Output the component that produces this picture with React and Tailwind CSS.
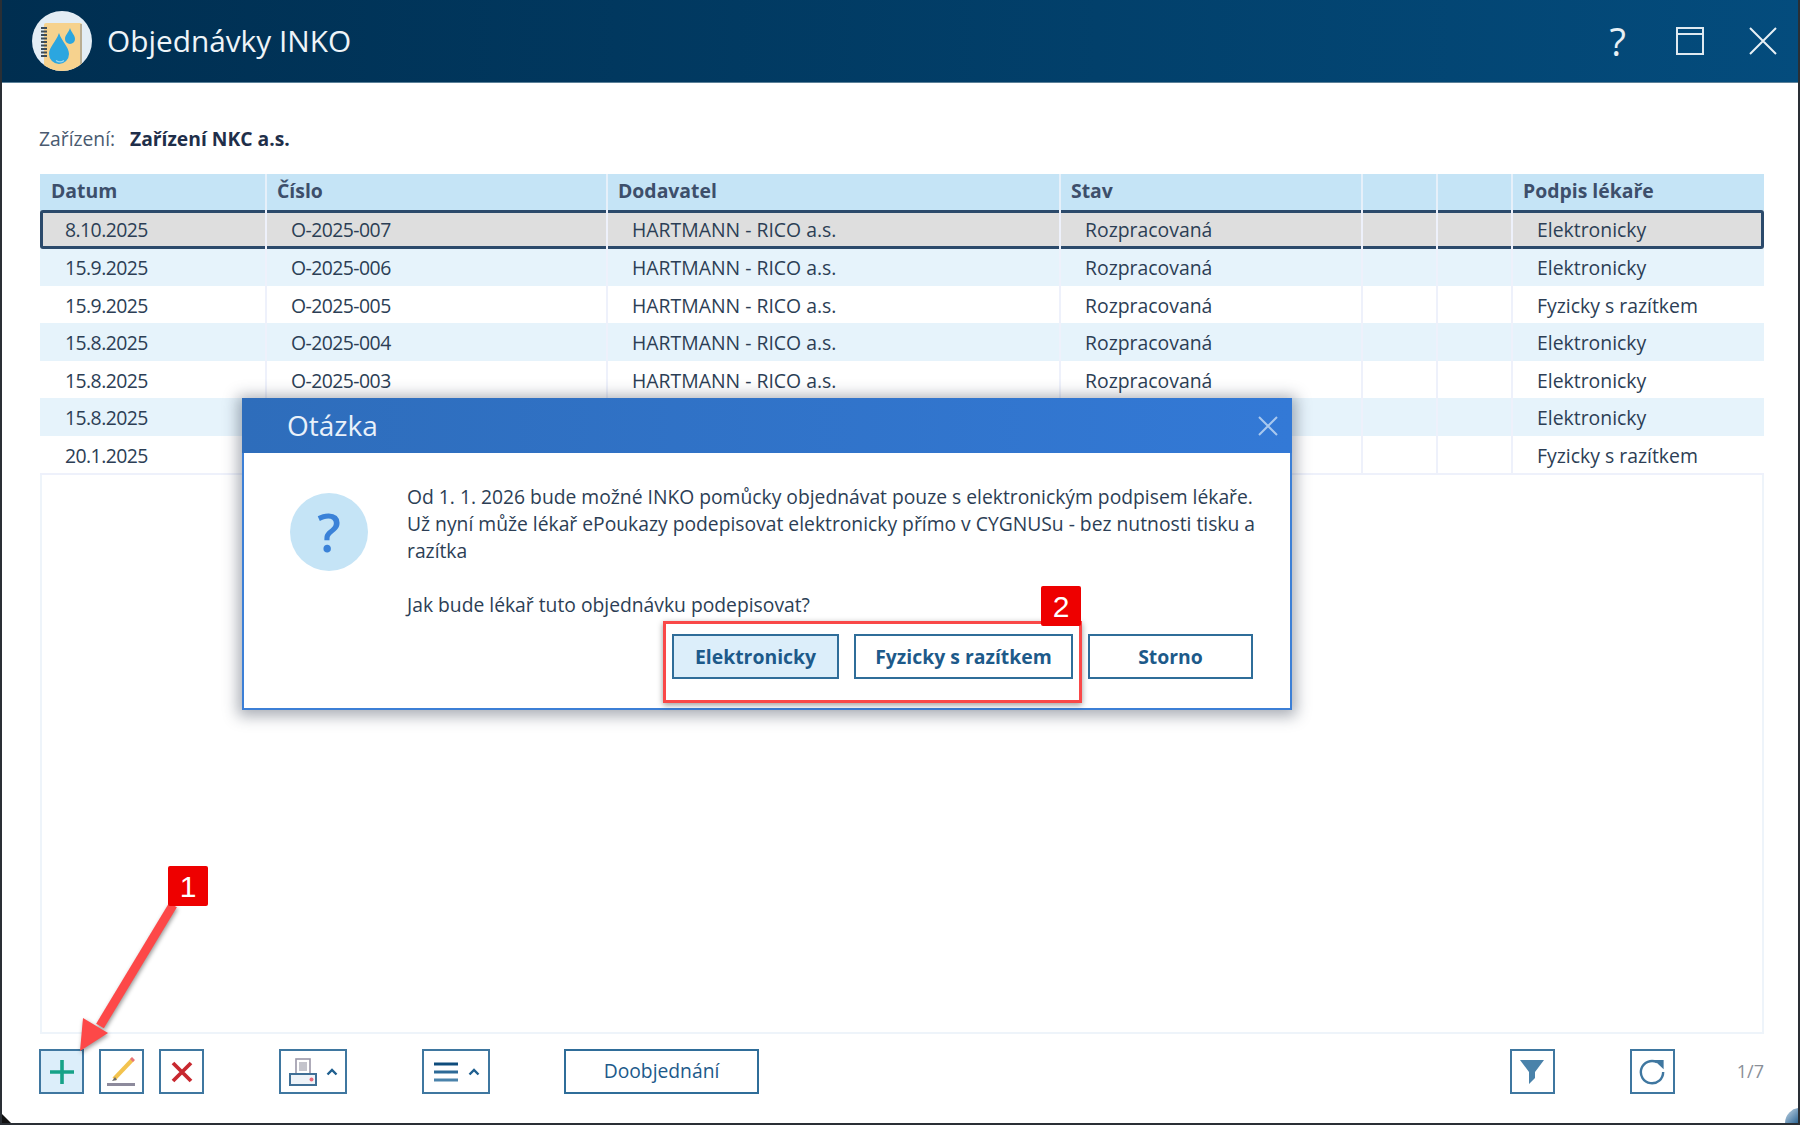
const FONT = "font-['Open_Sans','Noto_Sans',sans-serif]";

const COLS = "grid-cols-[227px_341px_453px_302px_75px_75px_251px]";

const rows = [
  ["8.10.2025", "O-2025-007", "Elektronicky"],
  ["15.9.2025", "O-2025-006", "Elektronicky"],
  ["15.9.2025", "O-2025-005", "Fyzicky s razítkem"],
  ["15.8.2025", "O-2025-004", "Elektronicky"],
  ["15.8.2025", "O-2025-003", "Elektronicky"],
  ["15.8.2025", "", "Elektronicky"],
  ["20.1.2025", "", "Fyzicky s razítkem"],
];

// App logo: notebook with two drops in a round badge
function Logo() {
  return (
    <svg width="60" height="60" viewBox="0 0 60 60" className="shrink-0">
      <defs>
        <clipPath id="logoClip">
          <circle cx="30" cy="30" r="30" />
        </clipPath>
      </defs>
      <circle cx="30" cy="30" r="30" fill="#e3edf5" />
      <g clipPath="url(#logoClip)">
        <rect x="12" y="12" width="38" height="48" rx="2" fill="#f6d28e" />
        <rect x="48" y="13" width="2" height="47" fill="#b9ad92" />
      </g>
      <path d="M9 17 h6 M9 20.500 h6 M9 24 h6 M9 27.500 h6 M9 31 h6 M9 34.500 h6 M9 38 h6 M9 41.500 h6 M9 45 h6" stroke="#3e4c58" strokeWidth="1.8" />
      <path d="M27 22 C24 31 17 36 17 43 a10 10 0 0 0 20 0 C37 36 30 31 27 22 z" fill="#2ba6e0" />
      <path d="M24 49.500 a7 7 0 0 0 8 0" stroke="#9ad8f2" strokeWidth="1.2" fill="none" />
      <path d="M38 17 C36.500 22 33 24 33 28 a5 5 0 0 0 10 0 C43 24 39.500 22 38 17 z" fill="#2ba6e0" />
    </svg>
  );
}

function ToolButton({ w = "w-[45px]", active, children }) {
  return (
    <button className={`${w} h-[45px] flex items-center justify-center gap-[9px] border-2 border-[#3f77a0] ${active ? "bg-[#dceefa]" : "bg-white"}`}>
      {children}
    </button>
  );
}

function Caret() {
  return (
    <svg width="12" height="8" viewBox="0 0 12 8">
      <path d="M1.500 6.500 L6 2 L10.500 6.500" fill="none" stroke="#1f5f8f" strokeWidth="2.4" />
    </svg>
  );
}

function DialogButton({ w, active, children }) {
  return (
    <button className={`${w} h-[45px] border-2 border-[#2f6d99] text-[19.4px] font-bold text-[#1d5a8a] ${active ? "bg-[#dceefa]" : "bg-white"}`}>
      {children}
    </button>
  );
}

function App() {
  return (
    <div className={`${FONT} relative w-[1800px] h-[1125px] flex flex-col overflow-hidden bg-white border-x-2 border-b-2 border-[#2a2f35] text-[#2c3e55]`}>
      {/* Title bar */}
      <div className="h-[83px] shrink-0 -mx-[2px] flex items-center pl-[32px] bg-gradient-to-r from-[#002e50] to-[#044c7d] border-b border-[#5c8199]">
        <Logo />
        <span className="ml-[15px] text-[29.8px] pt-[1px] text-[#eef4f8]">Objednávky INKO</span>
        <div className="ml-auto flex items-center text-white">
          <span className="text-[38px] leading-none text-[#e8f0f5] mr-[50px]">?</span>
          <svg width="28" height="28" viewBox="0 0 28 28" className="mr-[44px]">
            <path d="M1 1 H27 V27 H1 Z M1 7 H27" fill="none" stroke="#dfe9f0" strokeWidth="2" />
          </svg>
          <svg width="30" height="30" viewBox="0 0 30 30" className="mr-[22px]">
            <path d="M2 2 L28 28 M28 2 L2 28" stroke="#e8f0f5" strokeWidth="2" />
          </svg>
        </div>
      </div>

      {/* Body */}
      <div className="flex-1 flex flex-col pl-[38px] pr-[34px]">
        <div className="h-[91px] flex items-center text-[19.3px] pt-[21px] -ml-px">
          <span className="w-[91px] text-[#4a5a70]">Zařízení:</span>
          <span className="font-bold text-[#1f2f4a]">Zařízení NKC a.s.</span>
        </div>

        <div className="h-[860px] border-2 border-t-0 border-[#eef4fa]">
          <div className={`grid ${COLS} h-[36.5px] bg-[#c5e4f6] text-[19.4px] font-bold text-[#3d4f6b] -mx-[2px]`}>
            {["Datum", "Číslo", "Dodavatel", "Stav", "", "", "Podpis lékaře"].map((h, i) => (
              <div key={i} className={`${i === 0 ? "pl-[11px]" : "pl-[10px]"} pb-[4px] flex items-center border-r-2 border-[#e6f0fa] last:border-r-0`}>{h}</div>
            ))}
          </div>
          <div className="-mx-[2px]">
            {rows.map((r, i) => {
              // rows under the dialog show only the outer columns
              const covered = i >= 5;
              return (
                <div
                  key={i}
                  className={`grid ${COLS} text-[19.4px] ${
                    i === 0
                      ? "relative h-[39.5px] -my-px bg-[#dedede] shadow-[inset_0_0_0_3px_#2b4a6b] rounded-[3px]"
                      : i % 2 === 1
                      ? "h-[37.5px] bg-[#e6f3fb]"
                      : "h-[37.5px] bg-white"
                  }`}
                >
                  {[r[0], r[1], covered ? "" : "HARTMANN - RICO a.s.", covered ? "" : "Rozpracovaná", "", "", r[2]].map((c, j) => (
                    <div
                      key={j}
                      className={`${j === 0 ? "pl-[25px]" : "pl-[24px]"} ${j < 2 ? "tracking-[-0.55px]" : ""} ${i === 0 ? "" : "pt-[2px]"} flex items-center border-r-2 border-[#eef1fb] last:border-r-0 whitespace-nowrap`}
                    >
                      {c}
                    </div>
                  ))}
                </div>
              );
            })}
            <div className="h-[2px] bg-[#eef1fb]" />
          </div>
        </div>

        {/* Toolbar */}
        <div className="mt-[15px] -ml-px flex items-center">
          <ToolButton active>
            <svg width="26" height="26" viewBox="0 0 26 26">
              <path d="M13 1 V25 M1 13 H25" stroke="#16a288" strokeWidth="3.6" />
            </svg>
          </ToolButton>
          <div className="w-[15px]" />
          <ToolButton>
            <svg width="30" height="30" viewBox="0 0 30 30">
              <path d="M26 2 L7 22" stroke="#f3c34e" strokeWidth="4" />
              <path d="M26.500 1.500 L24.500 3.500" stroke="#e8737a" strokeWidth="4" />
              <path d="M8 20 L5 24 L10 23 z" fill="#6b6b6b" />
              <path d="M0 27.500 H28" stroke="#8d8a9c" strokeWidth="3" />
            </svg>
          </ToolButton>
          <div className="w-[15px]" />
          <ToolButton>
            <svg width="24" height="24" viewBox="0 0 24 24">
              <path d="M3 3 L21 21 M21 3 L3 21" stroke="#c8282f" strokeWidth="3.8" />
            </svg>
          </ToolButton>
          <div className="w-[75px]" />
          <ToolButton w="w-[68px]">
            <svg width="28" height="28" viewBox="0 0 28 28">
              <rect x="7" y="1" width="14" height="17" fill="#fff" stroke="#9a97a8" strokeWidth="1.6" />
              <rect x="10" y="4" width="8" height="9" fill="#c4c4cc" />
              <rect x="1" y="16" width="26" height="11" fill="#eef3f8" stroke="#3f6f96" strokeWidth="2" />
              <circle cx="22.500" cy="21.500" r="2" fill="#e8697a" />
            </svg>
            <Caret />
          </ToolButton>
          <div className="w-[75px]" />
          <ToolButton w="w-[68px]">
            <svg width="26" height="20" viewBox="0 0 26 20">
              <path d="M1 2 H25" stroke="#0f4c7c" strokeWidth="3" />
              <path d="M1 10 H25" stroke="#2d6a97" strokeWidth="3" />
              <path d="M1 18 H25" stroke="#4a83ab" strokeWidth="3" />
            </svg>
            <Caret />
          </ToolButton>
          <div className="w-[74px]" />
          <button className="w-[195px] h-[45px] border-2 border-[#2f6d99] text-[19.3px] text-[#1d5a8a] bg-white">Doobjednání</button>
          <div className="flex-1" />
          <ToolButton>
            <svg width="24" height="24" viewBox="0 0 24 24">
              <path d="M0 0 H24 L15 12 V18 L9 24 V12 Z" fill="#4a82aa" />
            </svg>
          </ToolButton>
          <div className="w-[75px]" />
          <ToolButton>
            <svg width="26" height="26" viewBox="0 0 28 28">
              <path d="M19.500 3.500 A12 12 0 1 0 26 14" fill="none" stroke="#3f77a0" strokeWidth="2.6" />
              <path d="M16 1 L26.500 1 L26.500 11 z" fill="#3f77a0" />
            </svg>
          </ToolButton>
          <span className="ml-[62px] text-[18px] text-[#8a8f98]">1/7</span>
        </div>
      </div>

      {/* Question dialog */}
      <div className="absolute left-[240px] top-[398px] w-[1050px] h-[312px] flex flex-col bg-white border-2 border-[#3c7fd6] shadow-[0_2px_14px_4px_rgba(40,50,70,0.4)]">
        <div className="h-[55px] shrink-0 -mx-[2px] -mt-[2px] flex items-center pl-[45px] pr-[13px] pb-[2px] bg-gradient-to-r from-[#2e6dbb] to-[#3379d6] text-[28px] text-[#e9f1fa]">
          Otázka
          <svg width="22" height="22" viewBox="0 0 22 22" className="ml-auto mt-[2px]">
            <path d="M2 2 L20 20 M20 2 L2 20" stroke="#a9c8ee" strokeWidth="2" />
          </svg>
        </div>
        <div className="flex-1 flex pl-[46px] pt-[40px]">
          <div className="w-[78px] h-[78px] shrink-0 rounded-full bg-[#c5e4f6] flex items-center justify-center text-[52px] font-semibold text-[#3b82d8]">?</div>
          <div className="ml-[39px] flex-1 min-w-0 pr-[37px]">
            <p className="text-[19.3px] leading-[27px] -mt-[10px] whitespace-nowrap">
              Od 1. 1. 2026 bude možné INKO pomůcky objednávat pouze s elektronickým podpisem lékaře.
              <br />
              Už nyní může lékař ePoukazy podepisovat elektronicky přímo v CYGNUSu - bez nutnosti tisku a
              <br />
              razítka
            </p>
            <p className="text-[19.3px] leading-[27px] mt-[27px]">Jak bude lékař tuto objednávku podepisovat?</p>
            <div className="mt-[16px] flex justify-end gap-[15px]">
              <DialogButton w="w-[167px]" active>Elektronicky</DialogButton>
              <DialogButton w="w-[219px]">Fyzicky s razítkem</DialogButton>
              <DialogButton w="w-[165px]">Storno</DialogButton>
            </div>
          </div>
        </div>
      </div>

      {/* Annotations */}
      <div className="absolute left-[661px] top-[621px] w-[419px] h-[82px] border-[3px] border-[#f94848] shadow-[0_2px_6px_rgba(0,0,0,0.4)]" />
      <div className="absolute left-[1039px] top-[586px] w-[40px] h-[40px] rounded-[2px] bg-[#ee0000] flex items-center justify-center text-white text-[30px] font-['Liberation_Sans',sans-serif]">2</div>
      <svg className="absolute -left-[2px] top-[860px] drop-shadow-[1px_2px_2px_rgba(0,0,0,0.4)]" width="220" height="200" viewBox="0 860 220 200">
        <path d="M173 905 L100 1026" stroke="#fd4848" strokeWidth="9" />
        <path d="M80 1051 L83 1018 L108 1033 z" fill="#fd4848" />
      </svg>
      <div className="absolute left-[166px] top-[866px] w-[40px] h-[40px] rounded-[2px] bg-[#ee0000] flex items-center justify-center text-white text-[30px] font-['Liberation_Sans',sans-serif]">1</div>

      {/* Window corners */}
      <div className="absolute -left-[2px] bottom-0 w-[11px] h-[11px] bg-[#111] [clip-path:polygon(0_0,100%_100%,0_100%)]" />
      <div className="absolute -right-[2px] bottom-0 w-[15px] h-[15px] rounded-tl-full bg-gradient-to-br from-[#cfe0ec] to-[#1f5f8f]" />
    </div>
  );
}

export default App;
